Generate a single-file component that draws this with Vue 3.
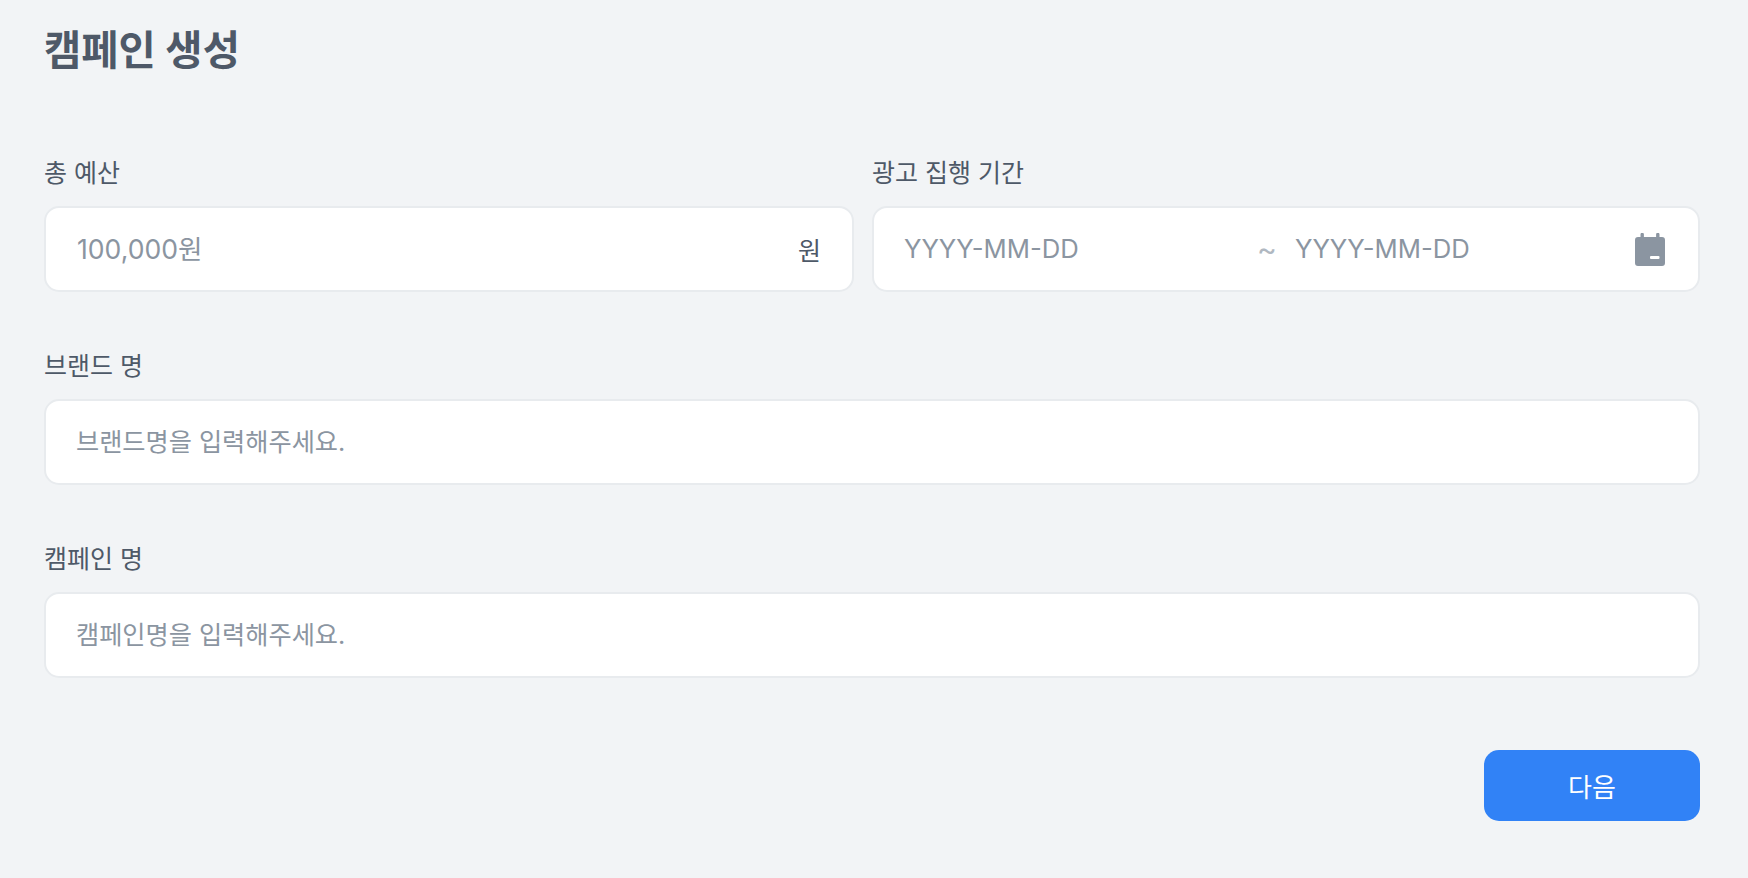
<script setup>
</script>

<template>
  <main class="page">
    <h1 class="title">캠페인 생성</h1>
    <form class="form" @submit.prevent>
      <div class="row">
        <div class="field">
          <label class="label">총 예산</label>
          <div class="box">
            <input class="input amount" placeholder="100,000원" />
            <span class="unit">원</span>
          </div>
        </div>
        <div class="field">
          <label class="label">광고 집행 기간</label>
          <div class="box">
            <input class="input date" placeholder="YYYY-MM-DD" />
            <span class="tilde">~</span>
            <input class="input date end" placeholder="YYYY-MM-DD" />
            <svg class="cal" width="30" height="33" viewBox="0 0 30 33" aria-hidden="true">
              <path fill="#8b95a1" d="M5.5 1.5a1.7 1.7 0 0 1 3.4 0V4h12.2V1.5a1.7 1.7 0 0 1 3.4 0V4H27a3 3 0 0 1 3 3v23a3 3 0 0 1-3 3H3a3 3 0 0 1-3-3V7a3 3 0 0 1 3-3h2.5z" />
              <rect x="15" y="23" width="9.5" height="3" rx="1" fill="#fff" />
            </svg>
          </div>
        </div>
      </div>
      <div class="field">
        <label class="label">브랜드 명</label>
        <div class="box"><input class="input text" placeholder="브랜드명을 입력해주세요." /></div>
      </div>
      <div class="field">
        <label class="label">캠페인 명</label>
        <div class="box"><input class="input text" placeholder="캠페인명을 입력해주세요." /></div>
      </div>
      <div class="actions">
        <button class="next" type="submit">다음</button>
      </div>
    </form>
  </main>
</template>

<style>
html, body { margin: 0; background: #f2f4f6; }
</style>

<style scoped>
.page {
  box-sizing: border-box;
  width: 1748px;
  height: 878px;
  padding: 21px 48px 0 44px;
  background: #f2f4f6;
  font-family: Inter, "Noto Sans CJK KR", sans-serif;
  overflow: hidden;
}
.title {
  margin: 0;
  font-size: 40.5px;
  line-height: 60px;
  font-weight: 700;
  color: #4e5968;
}
.form {
  margin-top: 76px;
  display: flex;
  flex-direction: column;
  gap: 58px;
}
.row {
  display: grid;
  grid-template-columns: 810fr 828fr;
  gap: 18px;
}
.field {
  display: flex;
  flex-direction: column;
  gap: 17px;
}
.label {
  font-size: 25px;
  line-height: 32px;
  font-weight: 400;
  color: #4e5968;
}
.box {
  box-sizing: border-box;
  height: 86px;
  display: flex;
  align-items: center;
  padding: 0 31px 0 30px;
  background: #fff;
  border: 2px solid #e8ebee;
  border-radius: 15px;
}
.input {
  flex: 1;
  min-width: 0;
  border: 0;
  outline: 0;
  padding: 0;
  background: transparent;
  font: inherit;
  line-height: 40px;
  color: #333d4b;
}
.input::placeholder {
  color: #8b95a1;
  opacity: 1;
}
.amount {
  margin-left: 1px;
  font-size: 26.6px;
}
.text {
  font-size: 25.2px;
}
.unit {
  font-size: 25px;
  color: #4e5968;
}
.date {
  flex: 0 0 353px;
  font-size: 25.7px;
}
.end {
  flex: 0 0 280px;
}
.tilde {
  width: 38px;
  flex: none;
  font-size: 30px;
  color: #b0b8c1;
}
.cal {
  margin-left: auto;
  margin-right: 2px;
  flex: none;
}
.actions {
  display: flex;
  justify-content: flex-end;
  margin-top: 14px;
}
.next {
  width: 216px;
  height: 71px;
  border: 0;
  border-radius: 15px;
  background: #3182f6;
  color: #fff;
  font: inherit;
  font-size: 26px;
  font-weight: 400;
}
</style>
